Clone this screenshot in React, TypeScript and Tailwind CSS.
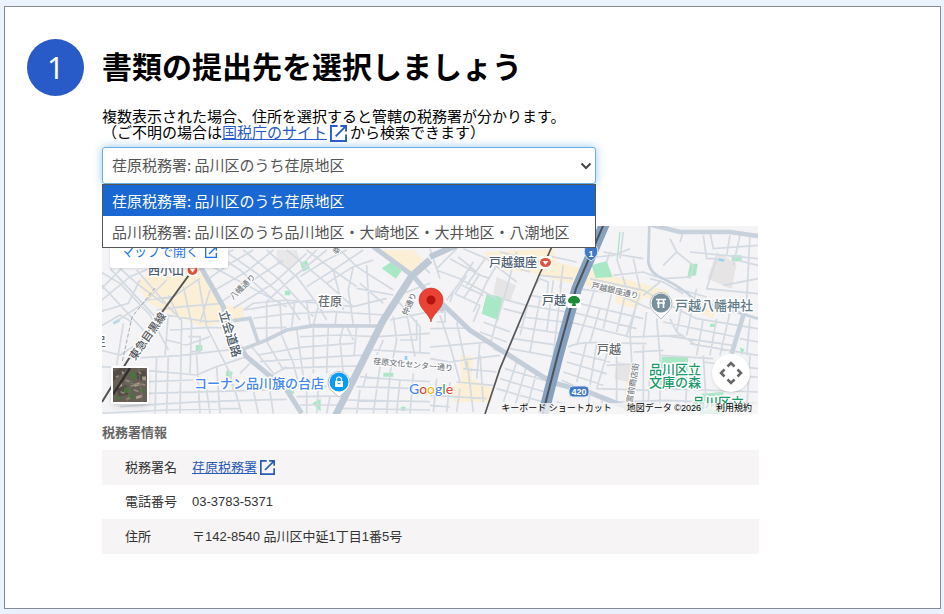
import React from 'react';

const offices = [
  '荏原税務署: 品川区のうち荏原地区',
  '品川税務署: 品川区のうち品川地区・大崎地区・大井地区・八潮地区',
];

const westStreets = [
  // around Nishi-Koyama
  'M0 95 L60 130 L150 225 L205 330', 'M0 150 L60 90 L110 30', 'M0 185 L90 110 L150 85', 'M0 130 L130 270', 'M30 85 L170 235',
  'M60 85 L110 130 L190 190', 'M0 215 L85 190 L120 120', 'M40 250 L130 190 L200 120', 'M0 260 L60 225 L95 245', 'M110 90 L205 200 L245 240',
  'M140 180 L220 170 L300 115', 'M170 210 L250 200 L370 190', 'M200 225 L320 245 L400 240', 'M205 165 L240 240', 'M250 140 L275 250',
  'M295 115 L320 260', 'M330 150 L300 250', 'M205 225 L195 345', 'M245 240 L240 520', 'M275 250 L270 400', 'M210 270 L330 262 L400 265',
  'M200 300 L260 315 L330 290', 'M265 290 h35 v45 h-30', 'M320 260 L360 340 L390 400 L425 520',
  // south west
  'M85 355 L240 347 L340 335 L430 325', 'M0 330 L60 345 L100 320', 'M0 380 L85 385', 'M145 392 L290 405 L350 380 L440 350', 'M145 425 L280 420',
  'M145 460 L330 455 L500 450', 'M60 500 L300 485 L560 478', 'M0 520 L200 510 L420 505', 'M170 350 L165 520', 'M205 350 L200 520', 'M290 345 L300 520',
  'M320 450 L330 520', 'M350 380 L360 520', 'M390 400 L400 450', 'M450 370 L420 400', 'M460 450 L475 520', 'M510 455 L520 520', 'M70 250 L50 375',
  // north centre
  'M300 60 L560 200', 'M330 30 L420 90 L520 180', 'M370 30 L470 100 L560 180 L600 240', 'M430 30 L540 120 L640 230', 'M500 30 L590 110 L650 190 L680 240',
  'M290 95 L350 50 L400 30', 'M320 120 L400 65 L460 30', 'M345 150 L440 95 L520 30', 'M365 185 L460 120 L550 60', 'M400 205 L520 130 L620 40',
  'M430 210 L560 190 L640 180', 'M500 185 L570 120 L680 30', 'M560 30 L680 130 L760 200', 'M620 30 L700 90 L770 140', 'M600 110 L680 60 L740 30',
  'M620 140 L700 90 L790 30', 'M680 130 L760 80 L820 60', 'M650 30 L620 60', 'M720 30 L770 80 L880 150', 'M700 90 L730 210', 'M760 80 L745 150 L760 255',
  'M800 75 L810 250', 'M770 145 L880 165', 'M430 210 L460 190 L560 180 L760 200 L860 175', 'M460 235 L560 222 L700 215 L850 225', 'M465 265 L560 262',
  'M500 185 L500 295', 'M540 185 L545 275', 'M585 180 L575 262', 'M620 185 L630 255', 'M660 180 L640 255', 'M710 215 L705 258', 'M780 130 L850 190',
  // between the Tachiai road and the Nakahara road
  'M475 345 L600 322 L760 310', 'M480 365 L700 350 L800 345', 'M455 320 L520 400', 'M500 305 L550 390', 'M545 285 L580 370 L600 450', 'M590 265 L610 410',
  'M640 258 L640 400', 'M685 258 L680 400', 'M730 258 L720 300 L730 400', 'M770 258 L762 350', 'M600 290 L720 285 L820 290', 'M545 385 L690 380 L770 378',
  'M560 440 L680 440', 'M590 470 L730 468', 'M600 495 L715 495', 'M620 440 L620 520', 'M655 440 L650 520', 'M690 470 L680 520', 'M510 410 L560 380',
  'M740 258 L760 300',
  // east of the Nakahara road
  'M910 160 L990 130', 'M895 185 L960 260 L960 340', 'M870 240 L990 215', 'M920 220 L945 350', 'M880 230 L890 300 L870 400', 'M835 290 L990 280',
  'M900 300 h50 v-60', 'M820 330 L990 340', 'M850 300 L830 345', 'M780 410 L900 420 L990 425', 'M770 440 L930 445', 'M740 480 L990 485', 'M840 380 L820 520',
  'M870 405 L860 520', 'M900 420 L890 520', 'M940 400 L930 520', 'M720 505 L990 510', 'M780 450 L770 520', 'M800 400 L790 440', 'M960 70 L990 100',
];

const eastStreets = [
  // between the Nakahara road and the Ikegami line
  'M0 80 L30 170', 'M20 140 L80 80', 'M20 145 L90 170 L200 230', 'M100 80 L170 110 L260 180', 'M60 110 L150 160 L180 170', 'M85 105 L140 150',
  'M110 190 L165 110', 'M90 180 L130 120', 'M75 215 L110 160', 'M50 235 L90 180', 'M100 230 L150 155', 'M75 215 L150 250', 'M95 190 L160 220',
  'M130 270 L170 180 L200 130', 'M70 210 L60 240', 'M150 250 L130 300', 'M0 320 L110 318 L120 325', 'M20 270 h25 v30 h-25', 'M0 375 L60 370 L180 360',
  'M60 370 L90 480', 'M30 280 L60 370', 'M80 300 L110 440', 'M200 295 L180 370', 'M160 300 L240 330', 'M215 230 L290 250', 'M220 260 L280 275',
  'M150 330 L230 360', 'M180 110 L300 150', 'M210 90 L330 120', 'M260 90 L230 200 L200 300', 'M130 410 L210 400', 'M100 440 L200 450',
  'M0 410 L60 420 L130 410', 'M80 480 L190 490', 'M0 520 L170 530', 'M110 410 L130 570', 'M150 400 L160 540', 'M60 480 L50 570', 'M20 470 L10 570',
  'M150 360 L140 470', 'M0 550 L60 555', 'M190 380 L260 410', 'M90 500 L80 570',
  // between the two railways
  'M330 160 L430 170', 'M300 220 L420 240', 'M290 250 L410 270', 'M310 200 L330 170 L355 180 L350 230', 'M280 285 L400 300', 'M265 315 L395 335',
  'M250 350 L385 370', 'M240 380 L375 405', 'M350 100 L440 120', 'M370 175 L350 330', 'M395 180 L370 400', 'M330 230 L300 390', 'M300 220 L270 340',
  'M225 440 L360 480', 'M210 470 L345 510', 'M200 500 L340 540', 'M290 430 L250 570', 'M320 450 L290 560', 'M260 420 L220 540', 'M400 130 L390 200',
  // north east
  'M540 90 L530 120', 'M580 30 L570 110', 'M520 90 L640 110', 'M550 160 L640 150 L680 165', 'M560 110 L590 200', 'M610 110 L630 200', 'M500 105 L550 100 L600 80',
  'M440 200 L560 215 L660 260', 'M480 170 L640 205 L720 250', 'M500 180 L470 280', 'M550 190 L520 320', 'M590 200 L560 330', 'M630 215 L590 340',
  'M660 170 L700 180 L760 215', 'M720 50 L740 90 L790 130 L780 170', 'M760 30 L750 60', 'M740 90 L700 130', 'M820 40 L830 110 L860 110', 'M700 170 L780 165',
  'M840 30 L850 80 L984 70', 'M780 90 L984 110', 'M860 110 L830 200 L984 215', 'M910 130 L930 40', 'M960 35 L950 240', 'M880 190 L984 170',
  'M690 180 L640 220', 'M740 200 L830 225', 'M800 200 L790 240', 'M900 40 L890 100', 'M925 115 L984 130',
  // Togoshi
  'M430 240 L640 290', 'M425 270 L620 320', 'M420 300 L600 345', 'M440 240 L410 360', 'M480 250 L440 370', 'M510 260 L480 360', 'M620 240 L600 330 L610 500',
  'M650 270 L640 350', 'M680 290 L690 400', 'M600 345 L760 340', 'M420 390 L540 420', 'M410 420 L530 455', 'M400 450 L520 490', 'M470 360 L440 480',
  'M500 365 L480 490', 'M540 365 L500 500', 'M560 400 L560 540', 'M395 475 L430 490', 'M530 430 L620 425', 'M500 500 L660 505', 'M610 390 L700 385',
  'M640 370 L640 570', 'M660 440 L655 540', 'M560 540 L700 535', 'M480 515 L470 570', 'M520 520 L510 570', 'M380 540 L460 560', 'M600 490 L590 570',
  // south east
  'M720 290 L740 330 L800 370', 'M720 250 L800 290 L984 320', 'M760 230 L740 330', 'M790 245 L770 340', 'M820 290 L800 400', 'M860 290 L840 400',
  'M900 270 L870 400', 'M700 300 L920 345', 'M700 340 L910 370', 'M780 365 L984 400', 'M690 400 L850 410', 'M820 420 L984 440', 'M960 290 L950 400',
  'M930 350 L984 360', 'M820 400 L830 570', 'M700 500 L984 510', 'M770 500 L765 570', 'M860 510 L850 570', 'M960 400 L950 570', 'M690 400 L690 570',
  'M700 535 L984 545', 'M984 465 L900 460',
];

const ExternalIcon = ({ className }: { className: string }) => (
  <svg viewBox="0 0 18 18" className={className} fill="none" stroke="currentColor" strokeWidth="2" aria-hidden="true">
    <path d="M8 1 H1 V17 H17 V10" />
    <path d="M11 1 H17 V7 M17 1 L6 12" />
  </svg>
);

const MapCanvas: React.FC = () => (
  <svg
    viewBox="0 0 656 188"
    preserveAspectRatio="xMidYMid slice"
    className="block w-full h-full bg-[#f4f3f5]"
    fontFamily='"Liberation Sans", "Noto Sans CJK JP", sans-serif'
    role="img"
    aria-label="荏原税務署周辺の地図"
  >
    <g transform="translate(-2 14) scale(.3333)">
      <path d="M110 125 L170 85 L290 90 L350 150 L375 195 L430 200 L430 235 L310 262 L200 215 L140 185 Z M820 30 L940 30 L970 60 L930 100 Z" fill="#fbf0d6" />
      <path d="M845 85 L875 65 L905 92 L888 116 Z M600 70 L620 60 L630 85 L610 95 Z M287 315 h20 v18 h-20 Z M555 152 h16 v14 h-16 Z M637 490 L662 476 V515 Z M850 398 h30 v12 h-30 Z M380 390 l18 6 l-4 20 l-18 -4 Z M560 445 h22 v16 h-22 Z M903 500 h14 v12 h-14 Z" fill="#a8e8c5" />
      <path d="M530 30 L590 30 L600 60 L570 90 L530 70 Z" fill="#e9e8e9" />
      <path d="M40 250 l18 -10 M918 348 v12" stroke="#8fd3ee" strokeWidth="8" />
    </g>
    <g transform="translate(328 -4) scale(.3333)">
      <path
        d="M160 90 L370 80 L380 120 L640 185 L720 210 L700 240 L640 225 L620 260 L560 245 L550 205 L400 180 L300 150 L210 145 Z M90 400 L130 405 L125 470 L190 500 L185 540 L70 540 L65 500 L95 470 Z M810 230 L860 250 L850 290 L800 270 Z M590 470 L620 475 L610 560 L580 560 Z"
        fill="#fbf0d6"
      />
      <path
        d="M170 215 L218 225 L205 295 L155 275 Z M485 130 L530 117 L548 165 L497 168 Z M780 125 L803 125 L798 160 L772 165 Z M905 100 h30 v18 h-30 Z M695 405 L775 405 L770 500 L690 490 Z M815 515 L880 510 L880 576 L810 576 Z M840 305 h18 v10 h-18 Z M930 375 l14 8 l-10 16 Z"
        fill="#a8e8c5"
      />
      <path d="M200 165 L258 190 L240 240 L190 215 Z M860 90 L920 125 L905 200 L832 170 Z M560 420 L605 425 L595 480 L553 470 Z" fill="#e6e4e5" />
      <path d="M570 30 L562 110" stroke="#a8e8c5" strokeWidth="4" />
      <path d="M865 112 l18 4" stroke="#8fd3ee" strokeWidth="7" />
    </g>

    {/* streets */}
    <g fill="none" stroke="#d3dae2" strokeWidth="5">
      <g transform="translate(-2 14) scale(.3333)">
        <path d={westStreets.join(' ')} />
        <path d="M400 242 L450 235 L475 308 M430 327 L500 300 L560 270 L640 257 L840 258" stroke="#c8d2dc" strokeWidth="11" />
        <path d="M290 60 L330 130 L370 200 L390 280 L440 350 L560 450 L605 520" stroke="#c3ced9" strokeWidth="15" />
        <path d="M820 20 L940 108 L1030 215" stroke="#c3ced9" strokeWidth="15" />
        <path d="M705 530 L770 400 L850 240 L935 108 L990 60" stroke="#bdc9d5" strokeWidth="21" />
      </g>
      <g transform="translate(328 -4) scale(.3333)">
        <path d={eastStreets.join(' ')} />
        <path d="M415 375 Q440 360 500 362 L650 365" />
        <path d="M658 10 L655 120 Q660 155 700 170 Q760 200 790 230 L984 290" stroke="#c8d2dc" strokeWidth="8" />
        <path d="M650 5 L750 30 L900 30 L984 42 M940 280 L905 395" stroke="#c8d2dc" strokeWidth="14" />
        <path d="M0 105 L60 78 L110 60" stroke="#bdc9d5" strokeWidth="18" />
        <path d="M20 230 L120 325 L340 465 L380 485 L480 512 L600 560" stroke="#c3ced9" strokeWidth="15" />
        <path d="M526 0 L440 200 L385 400 L340 576" stroke="#86a1be" strokeWidth="32" />
        <path d="M524 0 L438 200 L383 400 L338 576" stroke="#49525e" strokeWidth="6" />
        <path d="M372 60 L325 165 L210 440 L165 576" stroke="#555" strokeWidth="5" />
      </g>
    </g>
    <g fill="none" stroke="#555">
      <path d="M87 49 L63 82 L26 134 L0 176" strokeWidth="2" />
      <path d="M53 62 L30 91 L20 137" stroke="#aaa" strokeDasharray="4 2" />
    </g>

    {/* area and street names */}
    <g stroke="#fff" strokeWidth="3" paintOrder="stroke" strokeLinejoin="round" fontSize="13" fontWeight="500">
      <g fontSize="12" fill="#4d6075">
        <text x="46" y="49">西小山</text>
        <text x="387" y="41">戸越銀座</text>
        <text x="440" y="79">戸越</text>
      </g>
      <g fontSize="12" fill="#666b70">
        <text x="216" y="80">荏原</text>
        <text x="495" y="128">戸越</text>
        <text x="-8" y="120">足</text>
      </g>
      <text x="573" y="84" fill="#607d8b">戸越八幡神社</text>
      <text x="92" y="162" fill="#4285f4">コーナン品川旗の台店</text>
      <g fill="#189a6a">
        <text x="547" y="148">品川区立</text>
        <text x="547" y="161">文庫の森</text>
        <text x="590" y="181">品川区立</text>
      </g>
      <text transform="translate(117 86) rotate(73)" fontSize="12" fill="#4a5865">立会道路</text>
      <text transform="translate(33 135) rotate(-55)" fontSize="11" fill="#55595e">東急目黒線</text>
      <g fontSize="8" fill="#7a7e84" strokeWidth="2">
        <text transform="translate(131 74) rotate(-44)">八幡通り</text>
        <text transform="translate(305 90) rotate(-66)">仲通り</text>
        <text transform="translate(271 138) rotate(5)">荏原文化センター通り</text>
        <text transform="translate(489 62) rotate(13)">戸越銀座通り</text>
        <text transform="translate(530 177) rotate(-80)">宮前商店街</text>
        <text transform="translate(233 29) rotate(-35)">幸</text>
      </g>
    </g>

    {/* stations */}
    <rect x="85" y="39" width="11" height="11" rx="2" fill="#fff" />
    <circle cx="90.500" cy="44" r="5" fill="#e4513c" />
    <path d="M87.500 42.500 h6 l-3 4 Z" fill="#fff" />
    <rect x="437" y="30" width="13" height="13" rx="2" fill="#fff" />
    <ellipse cx="443.500" cy="36.500" rx="5.500" ry="4.500" fill="#e4513c" />
    <path d="M440.500 35 h6 l-3 4 Z" fill="#fff" />
    <rect x="465" y="68" width="14" height="14" rx="2" fill="#fff" />
    <path d="M472 70 C475 70 478 72 478 75 C478 77 475 78 473.500 77 L474 80 H470 L470.500 77 C469 78 466 77 466 75 C466 72 469 70 472 70 Z" fill="#1d8a35" />

    {/* road shields */}
    <path d="M483 21 Q489 18 495 21 Q498 30 489 35 Q480 30 483 21 Z" fill="#3f78c6" stroke="#d9e6f5" />
    <text x="489" y="31" textAnchor="middle" fontSize="9" fontWeight="700" fill="#fff">1</text>
    <rect x="467" y="160" width="20" height="11" rx="4" fill="#4179c4" stroke="#d9e6f5" />
    <text x="477" y="169" textAnchor="middle" fontSize="9" fontWeight="700" fill="#fff">420</text>

    {/* place pins */}
    <path d="M237 171 L230 165 A11 11 0 1 1 244 165 Z" fill="#fff" stroke="#b9c0c8" strokeWidth="1" />
    <circle cx="237" cy="156" r="9.500" fill="#0a9bf5" />
    <path d="M233 155 h8 v6 h-8 Z" fill="#fff" />
    <path d="M234.500 155 v-1.500 a2.500 2.500 0 0 1 5 0 V155" fill="none" stroke="#fff" strokeWidth="1.200" />
    <path d="M235.500 157 q1.500 2 3 0" fill="none" stroke="#0a9bf5" />
    <path d="M559 93 L552 86 A11 11 0 1 1 566 86 Z" fill="#fff" stroke="#b9c0c8" strokeWidth="1" />
    <circle cx="559" cy="77" r="9.500" fill="#78909c" />
    <path d="M554 73.500 h10 M555 77 h8 M556.500 73 v9 M561.500 73 v9" fill="none" stroke="#fff" strokeWidth="1.700" />
    <path
      d="M329 96 C328.500 89 317 83 317 74 A12 12 0 0 1 341 74 C341 83 329.500 89 329 96 Z"
      fill="#ea4335"
      stroke="#c5221f"
      strokeWidth=".5"
    />
    <circle cx="329" cy="74" r="4.500" fill="#b31412" />

    <text x="307" y="168" fontFamily="Lato, sans-serif" fontSize="14" fontWeight="500" stroke="#fff" strokeWidth="2" paintOrder="stroke">
      <tspan fill="#4285f4">G</tspan>
      <tspan fill="#ea4335">o</tspan>
      <tspan fill="#fbbc04">o</tspan>
      <tspan fill="#4285f4">g</tspan>
      <tspan fill="#34a853">l</tspan>
      <tspan fill="#ea4335">e</tspan>
    </text>
  </svg>
);

const SatelliteThumb: React.FC = () => (
  <svg viewBox="0 0 36 36" className="block w-full h-full" aria-hidden="true">
    <rect width="36" height="36" fill="#665f56" />
    <path d="M0 4 L8 0 L16 0 L0 14 Z M22 6 L34 2 L36 12 L28 14 Z M4 22 L14 18 L18 28 L6 30 Z" fill="#524c45" />
    <path d="M17 6 l6 -2 l3 5 l-5 4 Z M12 20 l8 2 l-2 5 l-7 -1 Z M16 29 l5 -2 l2 5 l-6 1 Z M2 32 l5 -3 l2 5 Z M28 24 l5 -3 l2 6 Z" fill="#4c7040" />
    <path d="M31 9 h4 v4 h-4 Z M5 18 l4 -2 l1 3 l-4 2 Z M22 17 l6 -2 l1 3 l-6 2 Z M24 30 l7 -2 v3 l-6 2 Z M9 3 l3 2 l-2 2 Z" fill="#a89c88" />
    <path d="M13 13 l5 1 M22 23 l5 2 M8 25 l4 2 M27 4 l3 2 M14 33 l4 -1 M19 19 l4 -1 M30 17 l4 1 M3 10 l3 -2" stroke="#978d7d" strokeWidth="1.500" />
    <path d="M18 0 L0 28" stroke="#302f2e" strokeWidth="2.500" />
    <path d="M12 15 L36 19 M20 13 L15 36 M27 0 L31 36" stroke="#7f786d" strokeWidth=".700" />
  </svg>
);

const OfficeMap: React.FC = () => (
  <div className="relative h-[188px] w-full max-w-[656px] overflow-hidden">
    <MapCanvas />
    <a
      href="#map"
      className="absolute left-2 top-[10px] h-8 px-[11px] flex items-center gap-[6px] bg-white rounded-xs shadow text-[13px] text-[#1a73e8] whitespace-nowrap"
    >
      マップで開く
      <ExternalIcon className="size-3" />
    </a>
    <button type="button" aria-label="航空写真に切り替え" className="absolute left-[9px] bottom-[10px] size-[38px] border-2 border-white rounded-xs shadow-md overflow-hidden">
      <SatelliteThumb />
    </button>
    <button type="button" aria-label="地図のカメラ コントロール" className="absolute right-2 bottom-[22px] size-[38px] rounded-full bg-white shadow flex items-center justify-center">
      <svg viewBox="0 0 24 24" className="size-6" fill="none" stroke="#666" strokeWidth="2.500" aria-hidden="true">
        <path d="M8.500 5.500 L12 2 L15.500 5.500 M8.500 18.500 L12 22 L15.500 18.500 M5.500 8.500 L2 12 L5.500 15.500 M18.500 8.500 L22 12 L18.500 15.500" />
      </svg>
    </button>
    <div className="absolute right-0 bottom-0 h-[11px] pl-1 pr-[6px] flex items-center gap-[15px] bg-[#f5f5f5]/80 text-[9px] text-black whitespace-nowrap">
      <button type="button">キーボード ショートカット</button>
      <span>地図データ ©2026</span>
      <a href="#terms">利用規約</a>
    </div>
  </div>
);

const OfficeSelect: React.FC = () => (
  <div className="relative mt-[7px] w-full max-w-[494px] text-[15px] text-[#555]">
    <select
      aria-label="税務署"
      className="block w-full h-[37px] pl-[9px] pr-8 appearance-none bg-white border border-[#66afe9] rounded-[3px] shadow-[0_0_8px_rgba(102,175,233,0.7)] outline-none"
    >
      {offices.map((office) => (
        <option key={office}>{office}</option>
      ))}
    </select>
    <svg viewBox="0 0 12 8" className="absolute right-1 top-[15px] w-3 h-2 pointer-events-none" fill="none" stroke="#444" strokeWidth="2" aria-hidden="true">
      <path d="M1.500 1.500 L6 6 L10.500 1.500" />
    </svg>
    <ul role="listbox" aria-label="税務署の候補" className="absolute z-10 left-0 top-full w-full bg-white border border-[#555]">
      {offices.map((office, i) => (
        <li
          key={office}
          role="option"
          aria-selected={i === 0}
          className={`h-[31px] px-[9px] leading-[31px] whitespace-nowrap overflow-hidden ${i === 0 ? 'bg-[#1967d2] text-white' : ''}`}
        >
          {office}
        </li>
      ))}
    </ul>
  </div>
);

const OfficeTable: React.FC = () => (
  <table className="w-full max-w-[657px] text-[13px] text-left text-[#333]">
    <caption className="pt-[9px] pb-[7px] text-left leading-5 font-bold text-[#666]">税務署情報</caption>
    <tbody>
      <tr className="h-[35px] bg-[#f6f4f5]">
        <th scope="row" className="w-[90px] pl-[23px] font-normal">税務署名</th>
        <td>
          <a href="#office" className="inline-flex items-center gap-[3px] text-[#2a5bb8]">
            <span className="underline">荏原税務署</span>
            <ExternalIcon className="size-[15px]" />
          </a>
        </td>
      </tr>
      <tr className="h-[34px]">
        <th scope="row" className="pl-[23px] font-normal">電話番号</th>
        <td>03-3783-5371</td>
      </tr>
      <tr className="h-[35px] bg-[#f6f4f5]">
        <th scope="row" className="pl-[23px] font-normal">住所</th>
        <td>〒142-8540 品川区中延1丁目1番5号</td>
      </tr>
    </tbody>
  </table>
);

const App: React.FC = () => {
  return (
    <div lang="ja" className="min-h-screen flex bg-[#eaf2fe] pt-[6px] pr-[3px] pb-[5px] pl-1 font-['Liberation_Sans','Noto_Sans_CJK_JP',sans-serif]">
      <main className="flex-1 flex items-start gap-[18px] bg-white border border-[#878b94] pt-8 pl-[22px] pr-6">
        <div className="size-[57px] shrink-0 rounded-full bg-[#285ac8] flex items-center justify-center text-[30px] leading-[30px] text-white font-['Noto_Sans',sans-serif]">
          1
        </div>
        <div className="flex-1 min-w-0">
          <div className="font-['Noto_Sans_CJK_JP',sans-serif]">
            <h1 className="text-[30px] leading-[52px] font-bold text-black">書類の提出先を選択しましょう</h1>
            <p className="mt-[17px] text-[15px] leading-4 text-black">
              複数表示された場合、住所を選択すると管轄の税務署が分かります。
              <br />
              （ご不明の場合は
              <a href="#nta" className="text-[#285ac8]">
                <span className="underline">国税庁のサイト</span>
                <ExternalIcon className="inline-block size-[17px] -my-2 mx-[3px] align-middle" />
              </a>
              から検索できます）
            </p>
            <OfficeSelect />
          </div>
          <div className="mt-[42px]">
            <OfficeMap />
          </div>
          <OfficeTable />
        </div>
      </main>
    </div>
  );
};

export default App;
